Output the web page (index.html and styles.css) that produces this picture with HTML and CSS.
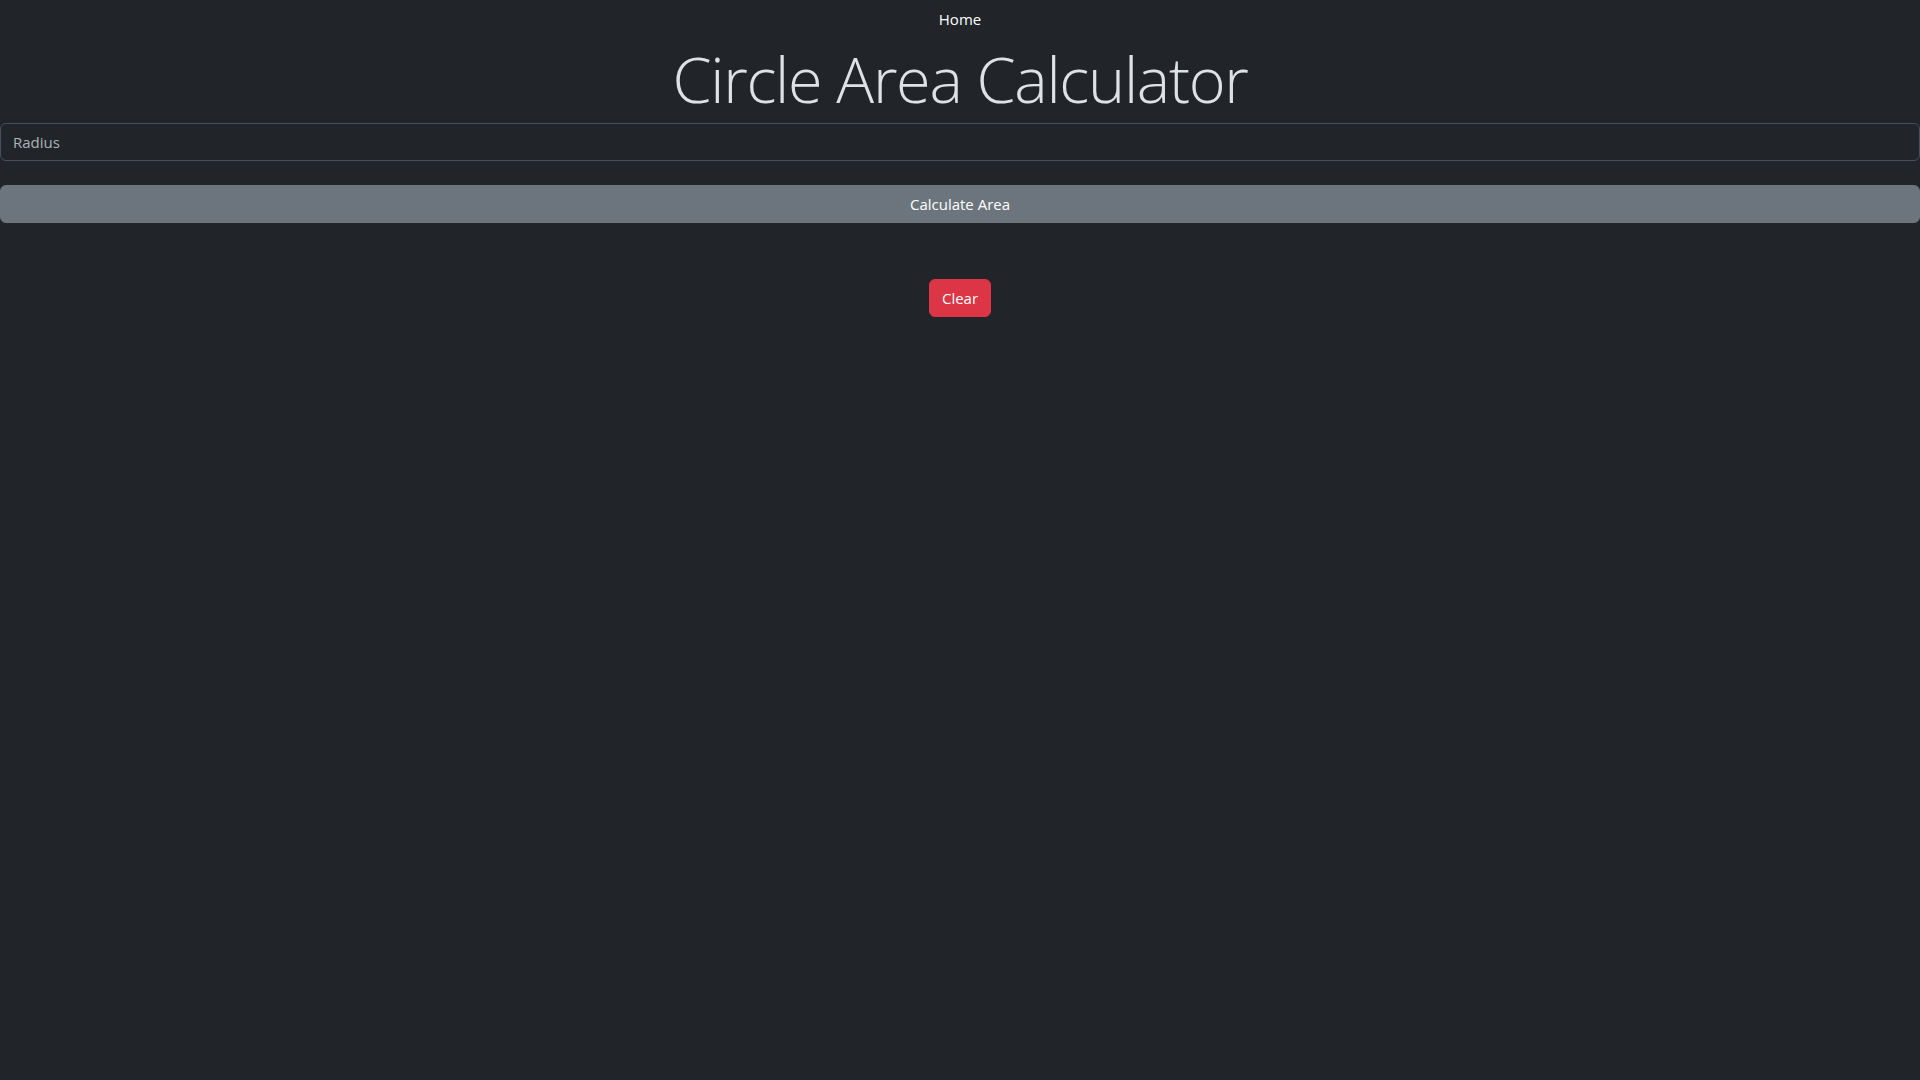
FILE: index.html
```html
<!DOCTYPE html>
<html lang="en">
<head>
<meta charset="utf-8">
<title>Circle Area Calculator</title>
<link rel="stylesheet" href="styles.css">
</head>
<body>
<nav class="nav">
  <a class="nav-link" href="#">Home</a>
</nav>
<main class="main">
  <h1 class="title">Circle Area Calculator</h1>
  <form class="calc-form">
    <input class="form-control" type="text" placeholder="Radius">
    <button type="button" class="btn btn-secondary btn-block">Calculate Area</button>
  </form>
  <div class="result"></div>
  <div class="actions">
    <button type="button" class="btn btn-danger">Clear</button>
  </div>
</main>
</body>
</html>
```

FILE: styles.css
```css
* { box-sizing: border-box; }
html, body { margin: 0; padding: 0; }
body {
  background: #212529;
  color: #dee2e6;
  font-family: "Open Sans", "Noto Sans", "Liberation Sans", sans-serif;
  font-size: 16px;
  line-height: 1.5;
  min-height: 100vh;
}
.nav {
  display: flex;
  justify-content: center;
}
.nav-link {
  display: block;
  padding: 7px 16px 9px;
  color: #ffffff;
  text-decoration: none;
  font-size: 15px;
  line-height: 24px;
}
.title {
  margin: 0 0 5px;
  text-align: center;
  font-weight: 300;
  font-size: 63px;
  line-height: 78px;
  letter-spacing: -1.3px;
  color: #dee2e6;
}
.calc-form {
  display: flex;
  flex-direction: column;
  gap: 24px;
}
.form-control {
  display: block;
  width: 100%;
  height: 38px;
  padding: 6px 12px;
  font-family: inherit;
  font-size: 15px;
  line-height: 24px;
  color: #dee2e6;
  background: #212529;
  border: 1px solid #495057;
  border-radius: 6px;
  outline: none;
}
.form-control::placeholder {
  color: rgba(222, 226, 230, 0.75);
}
.btn {
  display: inline-block;
  height: 38px;
  padding: 6px 12px;
  font-family: inherit;
  font-size: 15px;
  line-height: 24px;
  color: #ffffff;
  border: 1px solid transparent;
  border-radius: 6px;
  cursor: pointer;
}
.btn-secondary {
  background: #6c757d;
  border-color: #6c757d;
}
.btn-block { width: 100%; }
.result {
  height: 56px;
}
.actions {
  display: flex;
  justify-content: center;
}
.btn-danger {
  background: #dc3545;
  border-color: #dc3545;
}
```
